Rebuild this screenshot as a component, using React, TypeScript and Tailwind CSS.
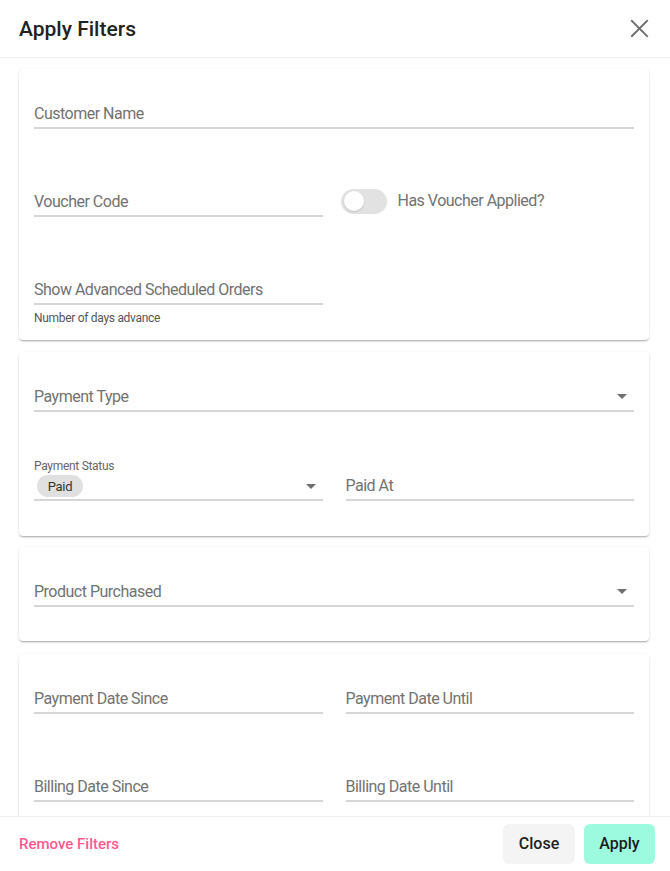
import React from "react";

const font = { fontFamily: "Roboto, 'Liberation Sans', sans-serif" };

function Arrow() {
  return (
    <svg width="24" height="24" viewBox="0 0 24 24" className="shrink-0">
      <path d="M7 10l5 5 5-5z" fill="#6f6f6f" />
    </svg>
  );
}

function Field({ label, select = false }: { label: string; select?: boolean }) {
  return (
    <div className="h-[32px] flex items-end pb-[1px] border-b-2 border-[#d6d6d6]">
      <span className="flex-1 text-[16px] tracking-[-0.5px] leading-6 text-[#727272]">{label}</span>
      {select && (
        <div className="mb-[1px]">
          <Arrow />
        </div>
      )}
    </div>
  );
}

function Card({ children, className = "" }: { children: React.ReactNode; className?: string }) {
  return (
    <div
      className={`shrink-0 bg-white rounded-[4px] px-[15px] pt-[28px] shadow-[0_2px_2px_-1px_rgba(0,0,0,0.2),0_1px_3px_0_rgba(0,0,0,0.12),0_1px_1px_0_rgba(0,0,0,0.08)] ${className}`}
    >
      {children}
    </div>
  );
}

export default function App() {
  return (
    <div style={font} className="w-[670px] h-[871px] bg-white flex flex-col overflow-hidden">
      {/* Header */}
      <div className="h-[58px] shrink-0 flex items-center justify-between pl-[19px] pr-[21px] border-b border-[#ececec]">
        <h1 className="text-[21px] font-medium text-[#222] leading-none mt-[2px]">Apply Filters</h1>
        <svg width="19" height="19" viewBox="0 0 20 20">
          <path d="M2 2L18 18M18 2L2 18" stroke="#6e6e6e" strokeWidth="2" strokeLinecap="square" />
        </svg>
      </div>

      {/* Content */}
      <div className="flex-1 overflow-hidden pt-[11px] pl-[19px] pr-[21px] flex flex-col">
        <Card className="pb-[15px]">
          <Field label="Customer Name" />
          <div className="mt-[56px] grid grid-cols-2 gap-x-[23px]">
            <Field label="Voucher Code" />
            <div className="h-[30px] flex items-center -ml-[5px] mt-[1px]">
              <div className="relative w-[46px] h-[25px] rounded-full bg-[#e2e2e2]">
                <div className="absolute left-[3px] top-[2.5px] w-[20px] h-[20px] rounded-full bg-white shadow-[0_1px_2px_rgba(0,0,0,0.15)]" />
              </div>
              <span className="ml-[11px] text-[16px] tracking-[-0.5px] text-[#727272]">Has Voucher Applied?</span>
            </div>
          </div>
          <div className="mt-[56px] grid grid-cols-2 gap-x-[23px]">
            <div>
              <Field label="Show Advanced Scheduled Orders" />
              <div className="mt-[6px] text-[12px] tracking-[-0.3px] leading-[14px] text-[#555]">Number of days advance</div>
            </div>
          </div>
        </Card>

        <Card className="mt-[12px] pb-[35px]">
          <Field label="Payment Type" select />
          <div className="mt-[47px] grid grid-cols-2 gap-x-[23px] items-end">
            <div>
              <div className="text-[12px] tracking-[-0.3px] leading-[14px] text-[#666]">Payment Status</div>
              <div className="h-[28px] flex items-center border-b-2 border-[#d6d6d6] pb-[1px]">
                <div className="flex-1">
                  <span className="inline-flex items-center justify-center ml-[3px] w-[46px] h-[22px] rounded-full bg-[#e0e0e0] text-[13px] tracking-[-0.3px] text-[#333]">
                    Paid
                  </span>
                </div>
                <Arrow />
              </div>
            </div>
            <Field label="Paid At" />
          </div>
        </Card>

        <Card className="mt-[11px] pb-[34px]">
          <Field label="Product Purchased" select />
        </Card>

        <Card className="mt-[13px] pb-[36px]">
          <div className="grid grid-cols-2 gap-x-[23px]">
            <Field label="Payment Date Since" />
            <Field label="Payment Date Until" />
          </div>
          <div className="mt-[56px] grid grid-cols-2 gap-x-[23px]">
            <Field label="Billing Date Since" />
            <Field label="Billing Date Until" />
          </div>
        </Card>
      </div>

      {/* Footer */}
      <div className="h-[55px] shrink-0 border-t border-[#ececec] flex items-center justify-between pl-[19px] pr-[15px]">
        <span className="text-[15px] font-medium text-[#ff5a8f]">Remove Filters</span>
        <div className="flex items-center gap-[9px]">
          <button className="h-[40px] w-[72px] rounded-[6px] bg-[#f4f4f4] text-[16px] font-medium text-[#222]">
            Close
          </button>
          <button className="h-[40px] w-[71px] rounded-[6px] bg-[#9cfbdf] text-[16px] font-medium text-[#1c1c1c]">
            Apply
          </button>
        </div>
      </div>
    </div>
  );
}
